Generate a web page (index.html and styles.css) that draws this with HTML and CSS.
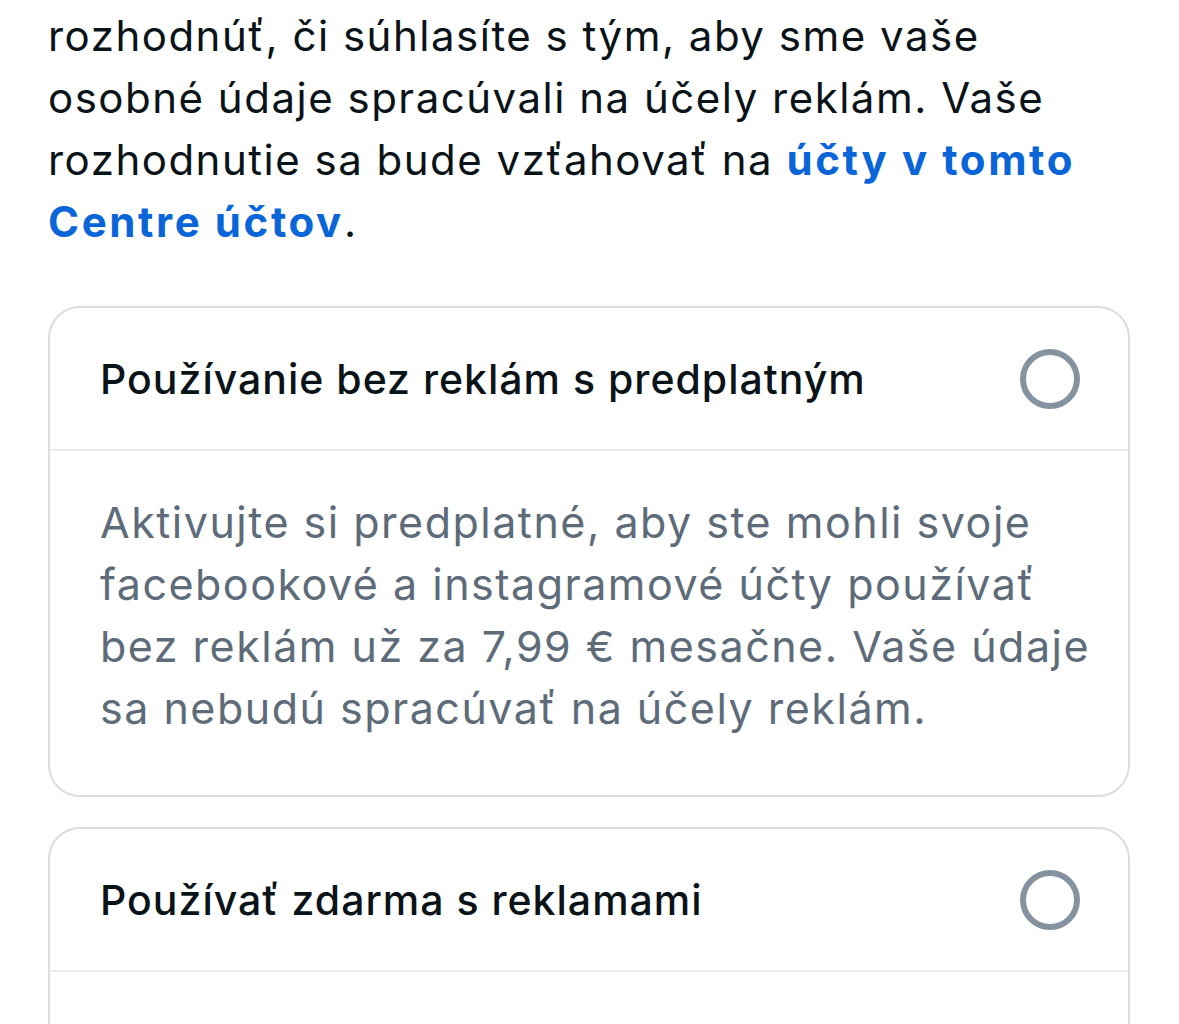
FILE: index.html
```html
<!DOCTYPE html>
<html lang="sk">
<head>
<meta charset="utf-8">
<title>Voľba reklám</title>
<link rel="stylesheet" href="styles.css">
</head>
<body>
<main class="page">
  <p class="intro">Ak chcete naďalej používať produkty, môžete sa<br>
    rozhodnúť, či súhlasíte s tým, aby sme vaše
    osobné údaje spracúvali na účely reklám. Vaše
    rozhodnutie sa bude vzťahovať na <a class="link" href="#">účty v tomto Centre účtov</a>.</p>

  <section class="card">
    <div class="card-head">
      <h2 class="card-title">Používanie bez reklám s predplatným</h2>
      <span class="radio"></span>
    </div>
    <div class="card-body">
      <p class="card-text">Aktivujte si predplatné, aby ste mohli svoje facebookové a instagramové účty používať bez reklám už za 7,99&nbsp;€ mesačne. Vaše údaje sa nebudú spracúvať na účely reklám.</p>
    </div>
  </section>

  <section class="card">
    <div class="card-head">
      <h2 class="card-title">Používať zdarma s reklamami</h2>
      <span class="radio"></span>
    </div>
    <div class="card-body">
      <p class="card-text">Objavujte produkty a značky prostredníctvom prispôsobených reklám a svoje účty používajte zadarmo.</p>
    </div>
  </section>
</main>
</body>
</html>
```

FILE: styles.css
```css
html, body {
  margin: 0;
  padding: 0;
  background: #ffffff;
}

body {
  font-family: Inter, "Noto Sans", sans-serif;
  color: #1c2b33;
  overflow: hidden;
}

.page {
  padding: 0 49px 0 48px;
}

.intro {
  margin: -57px 0 0 0;
  font-size: 42px;
  line-height: 62px;
  letter-spacing: 1.5px;
  color: #0a1317;
}

.link {
  color: #0a66d8;
  font-weight: 700;
  letter-spacing: 2.6px;
  text-decoration: none;
}

.card {
  margin-top: 53px;
  border: 2.5px solid #dadde1;
  border-radius: 32px;
  overflow: hidden;
}

.card + .card {
  margin-top: 30px;
}

.card-head {
  display: flex;
  align-items: center;
  justify-content: space-between;
  height: 141px;
  padding: 0 48px 0 50px;
  border-bottom: 2px solid #e9ebee;
}

.card-title {
  margin: 0;
  font-size: 41px;
  font-weight: 500;
  letter-spacing: 1px;
  color: #0a1317;
}

.radio {
  width: 48px;
  height: 48px;
  border: 6px solid #8592a0;
  border-radius: 50%;
  flex: none;
}

.card-body {
  padding: 40px 25px 56px 50px;
}

.card-text {
  margin: 0;
  font-size: 43px;
  line-height: 62px;
  letter-spacing: 1.5px;
  color: #5e6b79;
}
```
